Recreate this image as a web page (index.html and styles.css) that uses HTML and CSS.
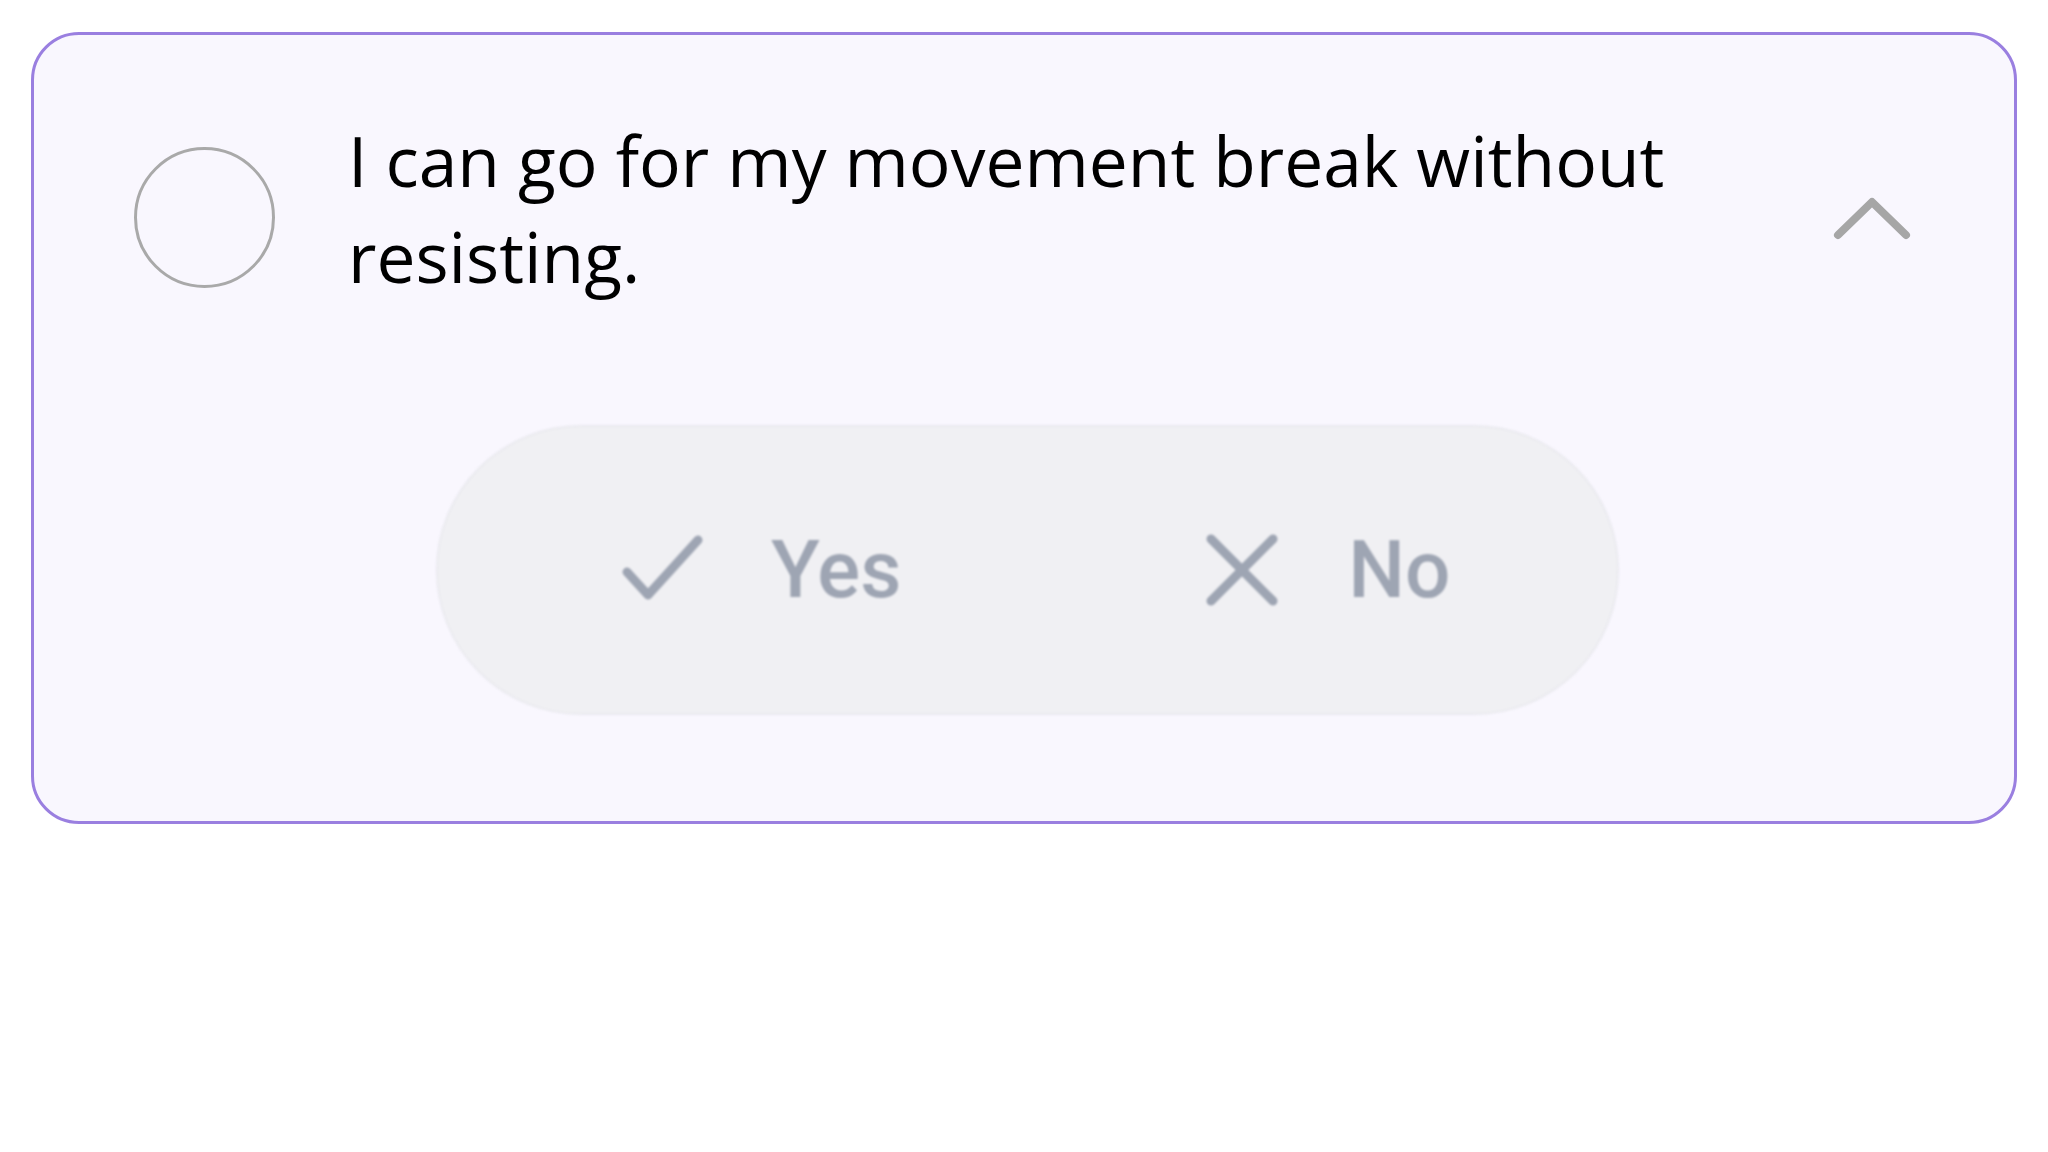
FILE: index.html
```html
<!DOCTYPE html>
<html lang="en">
<head>
<meta charset="utf-8">
<title>Movement break</title>
<link rel="stylesheet" href="styles.css">
</head>
<body>
<div class="page">
  <section class="card">
    <div class="header">
      <span class="radio" aria-hidden="true"></span>
      <p class="question">I can go for my movement break without resisting.</p>
      <svg class="chevron" width="80" height="60" viewBox="0 0 80 60" aria-hidden="true">
        <polyline points="6,47 40,14 74,47" fill="none" stroke="#a6a6a6" stroke-width="8" stroke-linecap="round" stroke-linejoin="round"/>
      </svg>
    </div>
    <div class="choices">
      <button class="choice choice-yes" type="button">
        <svg class="icon icon-check" width="84" height="70" viewBox="0 0 84 70" aria-hidden="true">
          <polyline points="8,37 29,60 79,5" fill="none" stroke="#9ea5b3" stroke-width="9" stroke-linecap="round" stroke-linejoin="round"/>
        </svg>
        <span class="label">Yes</span>
      </button>
      <button class="choice choice-no" type="button">
        <svg class="icon icon-x" width="76" height="76" viewBox="0 0 76 76" aria-hidden="true">
          <line x1="7" y1="7" x2="69" y2="69" stroke="#9ea5b3" stroke-width="9" stroke-linecap="round"/>
          <line x1="69" y1="7" x2="7" y2="69" stroke="#9ea5b3" stroke-width="9" stroke-linecap="round"/>
        </svg>
        <span class="label">No</span>
      </button>
    </div>
  </section>
</div>
</body>
</html>
```

FILE: styles.css
```css
* {
  box-sizing: border-box;
}

html, body {
  margin: 0;
  padding: 0;
  background: #ffffff;
}

.page {
  padding: 32px 31px;
}

.card {
  width: 1986px;
  height: 792px;
  border: 3px solid #9a7fe0;
  border-radius: 48px;
  background: #f9f7fe;
}

.header {
  display: flex;
  align-items: flex-start;
  padding: 77px 0 0 100px;
}

.radio {
  flex: none;
  width: 141px;
  height: 141px;
  margin-top: 35px;
  border: 3px solid #a9a9a9;
  border-radius: 50%;
}

.question {
  flex: 1;
  margin: 0 0 0 73px;
  font-family: "Open Sans", "Noto Sans", sans-serif;
  font-size: 69.5px;
  line-height: 96px;
  color: #000000;
}

.chevron {
  flex: none;
  margin: 76px 102px 0 40px;
}

.choices {
  display: flex;
  align-items: center;
  width: 1183px;
  height: 290px;
  margin: 121px 0 0 402px;
  padding-left: 181px;
  gap: 303px;
  background: #f0f0f3;
  border: 2px solid #eaeaef;
  border-radius: 145px;
  filter: blur(0.8px);
}

.choice {
  display: flex;
  align-items: center;
  gap: 68px;
  padding: 0;
  border: none;
  background: none;
  font-family: Roboto, "Liberation Sans", sans-serif;
  font-size: 80px;
  font-weight: 500;
  color: #9ea5b3;
  cursor: pointer;
}

.choice-no {
  gap: 68px;
}

.icon {
  flex: none;
  display: block;
}

.label {
  line-height: 1;
}
```
